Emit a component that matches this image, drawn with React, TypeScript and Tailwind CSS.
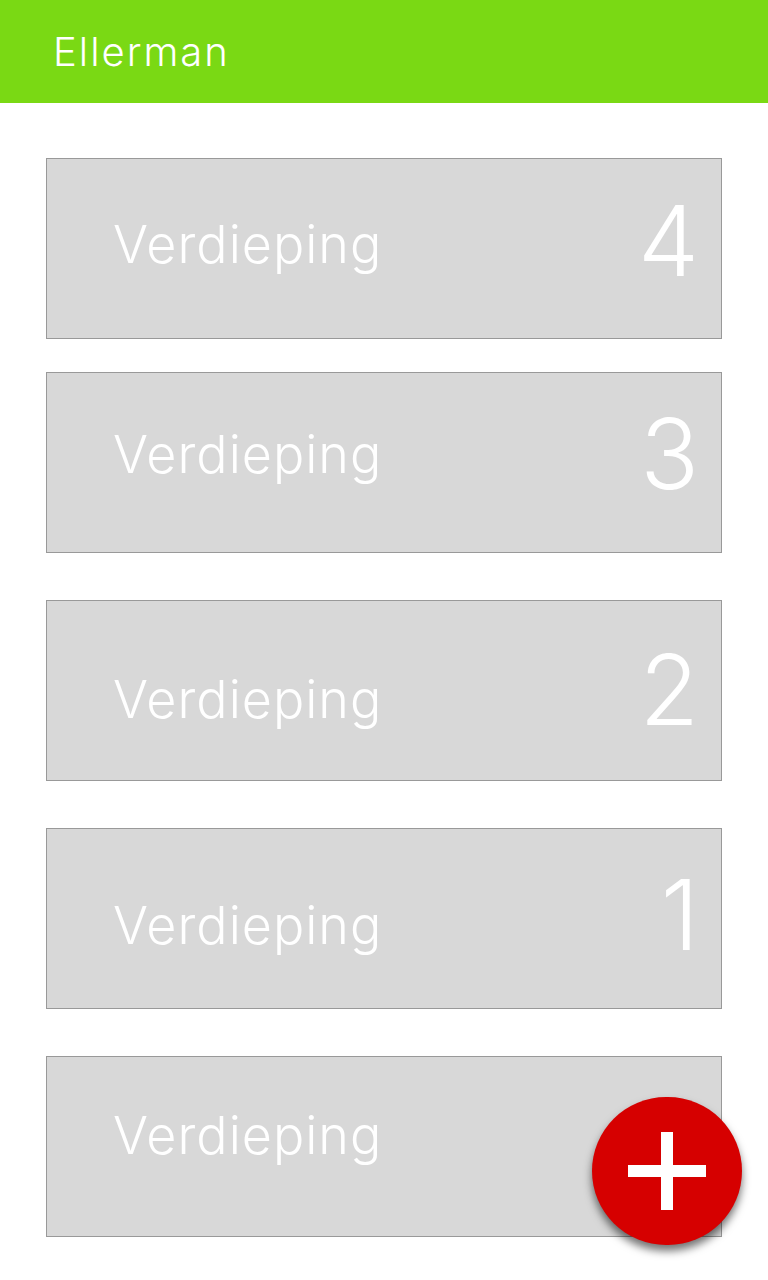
interface IFloor {
  number: string
  labelClass: string
  numberClass: string
  cardClass: string
}

const floors: IFloor[] = [
  { number: '4', labelClass: 'mt-[60px]', numberClass: 'mt-[33px]', cardClass: 'mt-[55px]' },
  { number: '3', labelClass: 'mt-[56px]', numberClass: 'mt-[32px]', cardClass: 'mt-[33px]' },
  { number: '2', labelClass: 'mt-[73px]', numberClass: 'mt-[40px]', cardClass: 'mt-[47px]' },
  { number: '1', labelClass: 'mt-[71px]', numberClass: 'mt-[37px]', cardClass: 'mt-[47px]' },
  { number: '', labelClass: 'mt-[53px]', numberClass: 'mt-[37px]', cardClass: 'mt-[47px]' },
]

function FloorCard({ item }: { item: IFloor }) {
  return (
    <div
      className={`${item.cardClass} h-[181px] border border-[#999999] bg-[#d8d8d8] flex items-start justify-between pl-[66px] pr-[22px]`}
    >
      <span className={`${item.labelClass} text-[52px] leading-none font-light tracking-[1px] text-white`}>
        Verdieping
      </span>
      <span className={`${item.numberClass} text-[97px] leading-none font-light text-white`}>
        {item.number}
      </span>
    </div>
  )
}

export default function App() {
  return (
    <div
      className="relative min-h-screen bg-white"
      style={{ fontFamily: 'Inter, "Open Sans", sans-serif' }}
    >
      <header className="h-[103px] bg-[#7ad914] flex items-center pl-[53px]">
        <span className="text-[40px] font-light tracking-[2px] text-white leading-none">Ellerman</span>
      </header>

      <div className="px-[46px]">
        {floors.map((item, i) => (
          <FloorCard key={i} item={item} />
        ))}
      </div>

      <button className="absolute right-[26px] bottom-[35px] w-[150px] h-[148px] rounded-full bg-[#d60000] flex items-center justify-center shadow-[0_6px_8px_rgba(0,0,0,0.55)]">
        <svg width="78" height="78" viewBox="0 0 78 78" fill="white">
          <rect x="33" y="0" width="12" height="78" />
          <rect x="0" y="33" width="78" height="12" />
        </svg>
      </button>
    </div>
  )
}
